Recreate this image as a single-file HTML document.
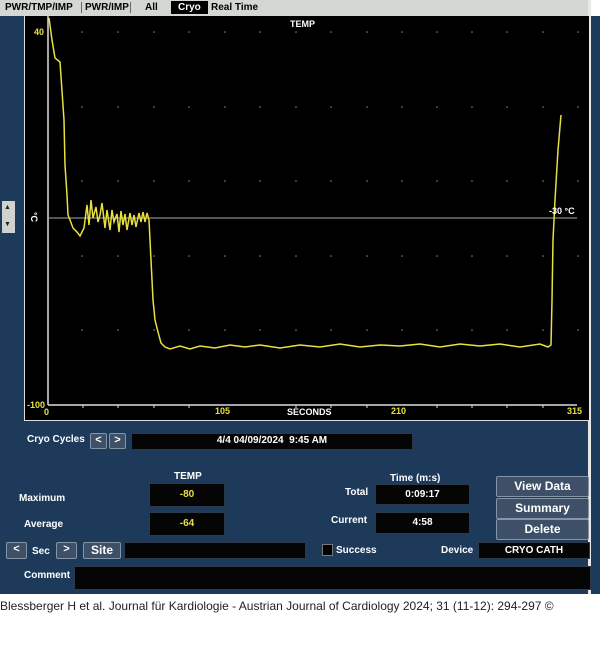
<!DOCTYPE html>
<html><head><style>
body{margin:0;width:600px;height:656px;background:#fff;position:relative;overflow:hidden;font-family:"Liberation Sans",sans-serif;font-weight:bold}
.a{position:absolute}
.tabs{left:0;top:0;width:588px;height:16px;background:#d4d8d4;font-size:10px;color:#000}
.tabs span{position:absolute;top:2px}
.blue{background:#1d3a5b}
.box{background:#050505;border:1px solid #2a3a4a;color:#fff;font-size:10px;text-align:center}
.btn{background:#3d5068;border:1px solid #8595a8;border-radius:2px;color:#fff;font-size:12px;text-align:center}
.lbl{color:#fff;font-size:10px}
</style></head><body>
<div class="a blue" style="left:0;top:16px;width:600px;height:578px"></div>
<div class="a" style="left:588px;top:0;width:3px;height:594px;background:#e8e8e8"></div>
<div class="a tabs"><span style="left:5px">PWR/TMP/IMP</span><span style="left:81px;border-left:1px solid #666;padding-left:3px">PWR/IMP</span><span style="left:130px;border-left:1px solid #666;padding-left:14px;width:30px">All</span><span style="left:171px;top:1px;background:#000;color:#fff;padding:1px 7px">Cryo</span><span style="left:211px">Real Time</span></div>
<div class="a" style="left:24px;top:16px;width:564px;height:404px;background:#000;border-left:1px solid #ddd;border-bottom:1px solid #ddd"></div>
<div class="a" style="left:2px;top:201px;width:13px;height:32px;background:#cfd2cf"></div>
<div class="a" style="left:4px;top:204px;font-size:7px;color:#222">▲</div>
<div class="a" style="left:4px;top:221px;font-size:7px;color:#222">▼</div>
<svg class="a" style="left:0;top:0" width="600" height="430">
<g fill="#888">
<g id="r"><circle cx="82" cy="32" r=".8"/><circle cx="118" cy="32" r=".8"/><circle cx="154" cy="32" r=".8"/><circle cx="189" cy="32" r=".8"/><circle cx="225" cy="32" r=".8"/><circle cx="260" cy="32" r=".8"/><circle cx="296" cy="32" r=".8"/><circle cx="331" cy="32" r=".8"/><circle cx="367" cy="32" r=".8"/><circle cx="402" cy="32" r=".8"/><circle cx="437" cy="32" r=".8"/><circle cx="472" cy="32" r=".8"/><circle cx="507" cy="32" r=".8"/><circle cx="543" cy="32" r=".8"/><circle cx="578" cy="32" r=".8"/></g>
<use href="#r" y="75"/><use href="#r" y="149"/><use href="#r" y="224"/><use href="#r" y="298"/>
</g>
<line x1="48" y1="16" x2="48" y2="405" stroke="#ddd" stroke-width="1.5"/>
<line x1="48" y1="405" x2="577" y2="405" stroke="#ddd" stroke-width="1.5"/>
<line x1="48" y1="218" x2="577" y2="218" stroke="#aaa" stroke-width="1"/>
<g stroke="#ddd"><line x1="83" y1="405" x2="83" y2="408"/><line x1="118" y1="405" x2="118" y2="408"/><line x1="154" y1="405" x2="154" y2="408"/><line x1="189" y1="405" x2="189" y2="408"/><line x1="296" y1="405" x2="296" y2="408"/><line x1="331" y1="405" x2="331" y2="408"/><line x1="367" y1="405" x2="367" y2="408"/><line x1="437" y1="405" x2="437" y2="408"/><line x1="472" y1="405" x2="472" y2="408"/><line x1="507" y1="405" x2="507" y2="408"/><line x1="543" y1="405" x2="543" y2="408"/></g>
<polyline fill="none" stroke="#e8e040" stroke-width="1.5" points="49,18 52,40 55,58 60,62 64,120 65,165 67,195 68,215 70,220 73,228 77,232 80,236 84,228 87,205 89,225 91,200 93,218 96,207 98,222 100,215 102,203 105,228 107,210 110,230 112,210 114,222 117,214 119,232 121,211 123,225 125,214 127,230 130,213 132,225 134,215 136,227 139,213 141,222 143,212 145,222 147,213 149,220 151,260 153,300 155,320 158,332 161,343 165,347 170,349 180,346 190,349 200,346 215,348 230,345 245,347 260,345 280,348 300,345 320,347 340,344 360,347 380,345 400,346 420,344 440,347 460,344 480,346 500,344 520,347 540,344 548,347 551,345 552,300 553,240 555,200 558,150 561,115"/>
</svg>
<div class="a" style="left:34px;top:27px;font-size:9px;color:#e8e040">40</div>
<div class="a" style="left:27px;top:400px;font-size:9px;color:#e8e040">-100</div>
<div class="a" style="left:44px;top:407px;font-size:9px;color:#e8e040">0</div>
<div class="a" style="left:215px;top:406px;font-size:9px;color:#e8e040">105</div>
<div class="a" style="left:391px;top:406px;font-size:9px;color:#e8e040">210</div>
<div class="a" style="left:567px;top:406px;font-size:9px;color:#e8e040">315</div>
<div class="a" style="left:287px;top:407px;font-size:9px;color:#fff">SECONDS</div>
<div class="a" style="left:290px;top:19px;font-size:9px;color:#fff">TEMP</div>
<div class="a" style="left:29px;top:212px;font-size:9px;color:#fff;transform:rotate(90deg)">°C</div>
<div class="a" style="left:549px;top:206px;font-size:9px;color:#fff">-30 °C</div>
<div class="a lbl" style="left:27px;top:434px">Cryo Cycles</div>
<div class="a btn" style="left:90px;top:433px;width:15px;height:14px;font-size:11px">&lt;</div>
<div class="a btn" style="left:109px;top:433px;width:15px;height:14px;font-size:11px">&gt;</div>
<div class="a box" style="left:131px;top:433px;width:280px;height:15px;line-height:14px">4/4 04/09/2024&nbsp; 9:45 AM</div>
<div class="a lbl" style="left:174px;top:471px">TEMP</div>
<div class="a lbl" style="left:390px;top:473px">Time (m:s)</div>
<div class="a lbl" style="left:19px;top:493px">Maximum</div>
<div class="a lbl" style="left:24px;top:519px">Average</div>
<div class="a box" style="left:149px;top:483px;width:74px;height:22px;line-height:22px;color:#e8e040">-80</div>
<div class="a box" style="left:149px;top:512px;width:74px;height:22px;line-height:22px;color:#e8e040">-64</div>
<div class="a lbl" style="left:345px;top:487px">Total</div>
<div class="a lbl" style="left:331px;top:515px">Current</div>
<div class="a box" style="left:375px;top:484px;width:93px;height:19px;line-height:19px">0:09:17</div>
<div class="a box" style="left:375px;top:512px;width:93px;height:20px;line-height:20px">4:58</div>
<div class="a btn" style="left:496px;top:476px;width:91px;height:19px;line-height:19px">View Data</div>
<div class="a btn" style="left:496px;top:498px;width:91px;height:19px;line-height:19px">Summary</div>
<div class="a btn" style="left:496px;top:519px;width:91px;height:19px;line-height:19px">Delete</div>
<div class="a btn" style="left:6px;top:542px;width:19px;height:15px;font-size:11px">&lt;</div>
<div class="a lbl" style="left:32px;top:546px">Sec</div>
<div class="a btn" style="left:56px;top:542px;width:19px;height:15px;font-size:11px">&gt;</div>
<div class="a btn" style="left:83px;top:542px;width:36px;height:15px;line-height:15px">Site</div>
<div class="a box" style="left:124px;top:542px;width:180px;height:15px"></div>
<div class="a" style="left:322px;top:544px;width:9px;height:10px;background:#000;border:1px solid #777"></div>
<div class="a lbl" style="left:336px;top:545px">Success</div>
<div class="a lbl" style="left:441px;top:545px">Device</div>
<div class="a box" style="left:478px;top:542px;width:110px;height:15px;line-height:15px">CRYO CATH</div>
<div class="a lbl" style="left:24px;top:570px">Comment</div>
<div class="a box" style="left:74px;top:566px;width:515px;height:22px"></div>
<div class="a" style="left:0;top:599px;font-size:12px;font-weight:normal;color:#222">Blessberger H et al. Journal für Kardiologie - Austrian Journal of Cardiology 2024; 31 (11-12): 294-297 ©</div>
</body></html>
